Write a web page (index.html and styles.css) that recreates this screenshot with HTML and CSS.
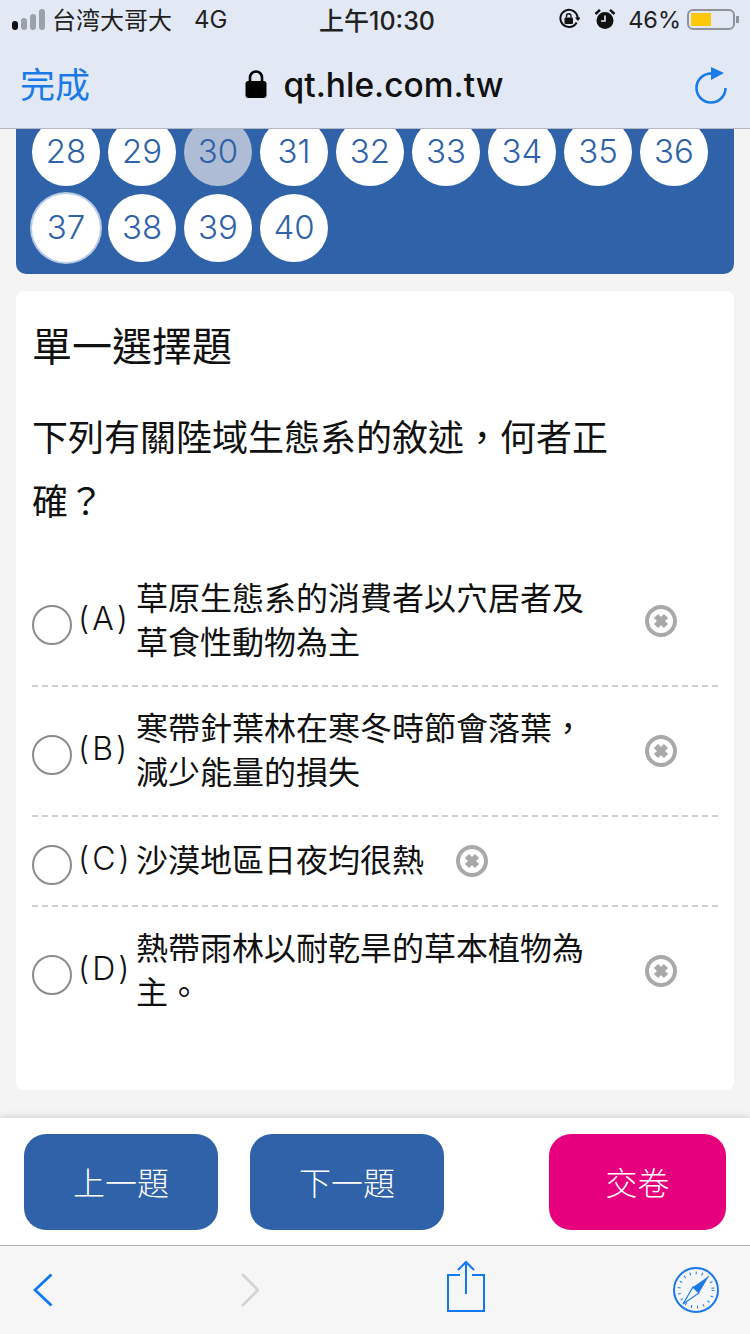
FILE: index.html
```html
<!DOCTYPE html>
<html lang="zh-Hant">
<head>
  <meta charset="UTF-8">
  <title>qt.hle.com.tw</title>
  <meta name="viewport" content="width=device-width, initial-scale=1.0">
  <link rel="stylesheet" href="styles.css">
</head>
<body>
  <header class="browser-top">
    <div class="status-bar">
      <div class="status-left">
        <span class="signal"><i class="on"></i><i></i><i></i><i></i></span>
        <span class="carrier">台湾大哥大</span>
        <span class="network">4G</span>
      </div>
      <div class="status-time">上午10:30</div>
      <div class="status-right">
        <svg class="icon-rotation" width="22" height="22" viewBox="0 0 22 22">
          <path d="M18.6 14.5A8.6 8.6 0 1 1 19.6 10" fill="none" stroke="#111" stroke-width="2"/>
          <path d="M17 9.5h5.5l-2.7 3.4z" fill="#111"/>
          <rect x="6.5" y="9.5" width="8.5" height="6.5" rx="1" fill="#111"/>
          <path d="M8.5 9.5V8a2.2 2.2 0 0 1 4.5 0v1.5" fill="none" stroke="#111" stroke-width="1.4"/>
        </svg>
        <svg class="icon-alarm" width="22" height="22" viewBox="0 0 22 22">
          <circle cx="11" cy="12.5" r="8.5" fill="#111"/>
          <path d="M1.5 6 6 1.8M20.5 6 16 1.8" stroke="#111" stroke-width="2.4"/>
          <path d="M11 7.5v5.5H7" fill="none" stroke="#e2e9f4" stroke-width="1.6"/>
        </svg>
        <span class="battery-text">46%</span>
        <span class="battery"><span class="battery-level"></span></span>
        <span class="battery-tip"></span>
      </div>
    </div>
    <nav class="url-bar">
      <a class="done-link">完成</a>
      <div class="url">
        <svg width="22" height="28" viewBox="0 0 22 28">
          <rect x="0.5" y="11" width="21" height="17" rx="3" fill="#000"/>
          <path d="M5 12V7.5a6 6 0 0 1 12 0V12" fill="none" stroke="#000" stroke-width="2.6"/>
        </svg>
        <span>qt.hle.com.tw</span>
      </div>
      <svg class="reload" width="34" height="38" viewBox="0 0 34 38">
        <path d="M17 7.5A14.5 14.5 0 1 0 31.5 22" fill="none" stroke="#1a7ae8" stroke-width="2.6"/>
        <path d="M17 1 30 7 17 14z" fill="#1a7ae8"/>
      </svg>
    </nav>
  </header>

  <main class="content">
    <section class="number-panel">
      <div class="number-grid">
        <a class="num">28</a>
        <a class="num">29</a>
        <a class="num current">30</a>
        <a class="num">31</a>
        <a class="num">32</a>
        <a class="num">33</a>
        <a class="num">34</a>
        <a class="num">35</a>
        <a class="num">36</a>
        <a class="num focused">37</a>
        <a class="num">38</a>
        <a class="num">39</a>
        <a class="num">40</a>
      </div>
    </section>

    <section class="question-card">
      <h2 class="question-type">單一選擇題</h2>
      <p class="question-text">下列有關陸域生態系的敘述，何者正確？</p>

      <div class="option">
        <span class="radio"></span>
        <span class="option-label">(A)</span>
        <span class="option-text">草原生態系的消費者以穴居者及草食性動物為主</span>
        <svg class="remove" viewBox="0 0 32 32"><use href="#remove-icon"/></svg>
      </div>
      <div class="option">
        <span class="radio"></span>
        <span class="option-label">(B)</span>
        <span class="option-text">寒帶針葉林在寒冬時節會落葉，減少能量的損失</span>
        <svg class="remove" viewBox="0 0 32 32"><use href="#remove-icon"/></svg>
      </div>
      <div class="option">
        <span class="radio"></span>
        <span class="option-label">(C)</span>
        <span class="option-text">沙漠地區日夜均很熱</span>
        <svg class="remove" viewBox="0 0 32 32"><use href="#remove-icon"/></svg>
      </div>
      <div class="option last">
        <span class="radio"></span>
        <span class="option-label">(D)</span>
        <span class="option-text">熱帶雨林以耐乾旱的草本植物為主。</span>
        <svg class="remove" viewBox="0 0 32 32"><use href="#remove-icon"/></svg>
      </div>
    </section>
  </main>

  <div class="actions">
    <button class="btn">上一題</button>
    <button class="btn">下一題</button>
    <button class="btn submit">交卷</button>
  </div>

  <footer class="toolbar">
    <svg width="20" height="34" viewBox="0 0 20 34"><path d="M18.5 1.5 2 17l16.5 15.5" fill="none" stroke="#0f78f2" stroke-width="2.8"/></svg>
    <svg width="18" height="34" viewBox="0 0 18 34"><path d="M1 1 17 17 1 33" fill="none" stroke="#d4d4d6" stroke-width="2.8"/></svg>
    <svg class="share" width="38" height="52" viewBox="0 0 38 52">
      <path d="M13 15H1v36h36V15H25" fill="none" stroke="#0f78f2" stroke-width="2"/>
      <path d="M19 2v32M11 10l8-8 8 8" fill="none" stroke="#0f78f2" stroke-width="2"/>
    </svg>
    <svg width="46" height="46" viewBox="0 0 46 46">
      <circle cx="23" cy="23" r="22" fill="none" stroke="#1a7ae8" stroke-width="2"/>
      <circle cx="23" cy="23" r="17" fill="none" stroke="#1a7ae8" stroke-width="3" stroke-dasharray="1 5.1"/>
      <path d="M36 9 26 26 20 20z" fill="#1a7ae8"/>
      <path d="M10 37 20 20l6 6z" fill="#f6f6f6" stroke="#1a7ae8" stroke-width="1.2"/>
    </svg>
  </footer>

  <svg class="icon-defs" width="0" height="0">
    <symbol id="remove-icon" viewBox="0 0 32 32">
      <circle cx="16" cy="16" r="14" fill="none" stroke="#a9a9a9" stroke-width="4"/>
      <path d="M11 11l10 10M21 11 11 21" stroke="#a9a9a9" stroke-width="6"/>
    </symbol>
  </svg>
</body>
</html>
```

FILE: styles.css
```css
:root {
  --blue: #2f62a8;
  --link: #1a7ae8;
  --pink: #e6007e;
  --page-bg: #f4f4f4;
  --text: #111;
}

html, body {
  margin: 0;
  padding: 0;
}

body {
  width: 750px;
  height: 1334px;
  overflow: hidden;
  display: flex;
  flex-direction: column;
  background: var(--page-bg);
  font-family: "Noto Sans CJK TC", "Inter", sans-serif;
  color: var(--text);
}

.browser-top {
  flex: none;
  height: 128px;
  background: #e2e9f4;
  border-bottom: 1px solid #b4b8c0;
}

.status-bar {
  height: 42px;
  padding: 0 11px 4px 12px;
  box-sizing: border-box;
  display: grid;
  grid-template-columns: 1fr auto 1fr;
  align-items: center;
  font-size: 24px;
  color: #222;
}

.status-left,
.status-right {
  display: flex;
  align-items: center;
}

.status-right {
  justify-content: flex-end;
}

.signal {
  display: flex;
  align-items: flex-end;
  gap: 3px;
  height: 21px;
  margin-right: 7px;
}

.signal i {
  width: 6px;
  border-radius: 3px;
  background: #9ca2ab;
}

.signal i:nth-child(1) { height: 9px; }
.signal i:nth-child(2) { height: 12px; }
.signal i:nth-child(3) { height: 16px; }
.signal i:nth-child(4) { height: 21px; }
.signal i.on { background: #111; }

.carrier {
  line-height: 1;
}

.network {
  margin-left: 22px;
  font-family: "Inter", sans-serif;
}

.status-time {
  padding-left: 3px;
  font-family: "Inter", "Noto Sans CJK TC", sans-serif;
  font-size: 25px;
  font-weight: 500;
}

.icon-rotation {
  margin-right: 14px;
}

.icon-alarm {
  margin-right: 12px;
}

.battery-text {
  font-family: "Inter", sans-serif;
  font-size: 23.5px;
  margin-right: 6px;
}

.battery {
  width: 48px;
  height: 21px;
  box-sizing: border-box;
  padding: 2px;
  border: 2px solid #8f949c;
  border-radius: 6px;
}

.battery-level {
  display: block;
  width: 20px;
  height: 13px;
  background: #fdc80a;
}

.battery-tip {
  width: 3px;
  height: 7px;
  margin-left: 1px;
  background: #8f949c;
}

.url-bar {
  height: 86px;
  padding: 0 22px 0 20px;
  display: grid;
  grid-template-columns: 1fr auto 1fr;
  align-items: center;
}

.done-link {
  font-size: 35px;
  line-height: 1;
  margin-top: -6px;
  color: var(--link);
}

.url {
  display: flex;
  align-items: center;
  gap: 17px;
  font-family: "Inter", sans-serif;
  font-size: 33.5px;
  font-weight: 500;
  color: #111;
}

.url svg {
  margin-top: -2px;
}

.reload {
  justify-self: end;
}

.content {
  flex: 1;
  min-height: 0;
  overflow: hidden;
}

.number-panel {
  margin: -23px 16px 0;
  padding: 12px 16px;
  background: var(--blue);
  border-radius: 0 0 10px 10px;
}

.number-grid {
  display: grid;
  grid-template-columns: repeat(9, 68px);
  gap: 8px;
}

.num {
  height: 68px;
  box-sizing: border-box;
  padding-bottom: 2px;
  display: flex;
  align-items: center;
  justify-content: center;
  border-radius: 50%;
  background: #fff;
  color: var(--blue);
  font-family: "Inter", sans-serif;
  font-size: 33px;
  font-weight: 300;
}

.num.current {
  background: #aebdd5;
}

.num.focused {
  box-shadow: 0 0 0 2px #b9cce6;
}

.question-card {
  margin: 17px 16px 0;
  height: 799px;
  padding: 28px 16px 0;
  box-sizing: border-box;
  background: #fff;
  border-radius: 8px;
}

.question-type {
  margin: 0;
  font-size: 40px;
  font-weight: 400;
  line-height: 50px;
}

.question-text {
  max-width: 600px;
  margin: 34px 0 26px;
  font-size: 36px;
  line-height: 64px;
}

.option {
  display: flex;
  align-items: center;
  padding: 20px 0;
  border-bottom: 2px dashed #cfcfcf;
}

.option.last {
  border-bottom: none;
}

.radio {
  flex: none;
  box-sizing: border-box;
  width: 40px;
  height: 40px;
  margin-top: 8px;
  border: 2px solid #8c8c8c;
  border-radius: 50%;
}

/* the label and text sit a little above the radio's centre */
.option-label,
.option-text {
  transform: translateY(-3px);
}

.option-label {
  flex: none;
  width: 58px;
  margin-left: 6px;
  font-family: "Inter", sans-serif;
  font-size: 32px;
  font-weight: 300;
  letter-spacing: 3px;
}

.option-text {
  max-width: 477px;
  font-size: 32px;
  line-height: 44px;
}

.remove {
  flex: none;
  width: 32px;
  height: 32px;
  margin-left: 32px;
}

.icon-defs {
  position: absolute;
}

.actions {
  flex: none;
  height: 127px;
  padding: 16px 24px 0;
  box-sizing: border-box;
  display: flex;
  align-items: flex-start;
  gap: 32px;
  background: #fff;
  box-shadow: 0 -2px 6px rgba(0, 0, 0, 0.12);
}

.btn {
  width: 194px;
  height: 96px;
  padding: 0 0 2px;
  border: none;
  border-radius: 22px;
  background: var(--blue);
  color: #fff;
  font-family: inherit;
  font-size: 32px;
  font-weight: 300;
}

.btn.submit {
  width: 177px;
  margin-left: auto;
  background: var(--pink);
}

.toolbar {
  flex: none;
  height: 89px;
  padding: 0 31px 0 33px;
  box-sizing: border-box;
  display: flex;
  align-items: center;
  justify-content: space-between;
  background: #f6f6f6;
  border-top: 1px solid #b2b2b2;
}

.share {
  margin-bottom: 8px;
}
```
